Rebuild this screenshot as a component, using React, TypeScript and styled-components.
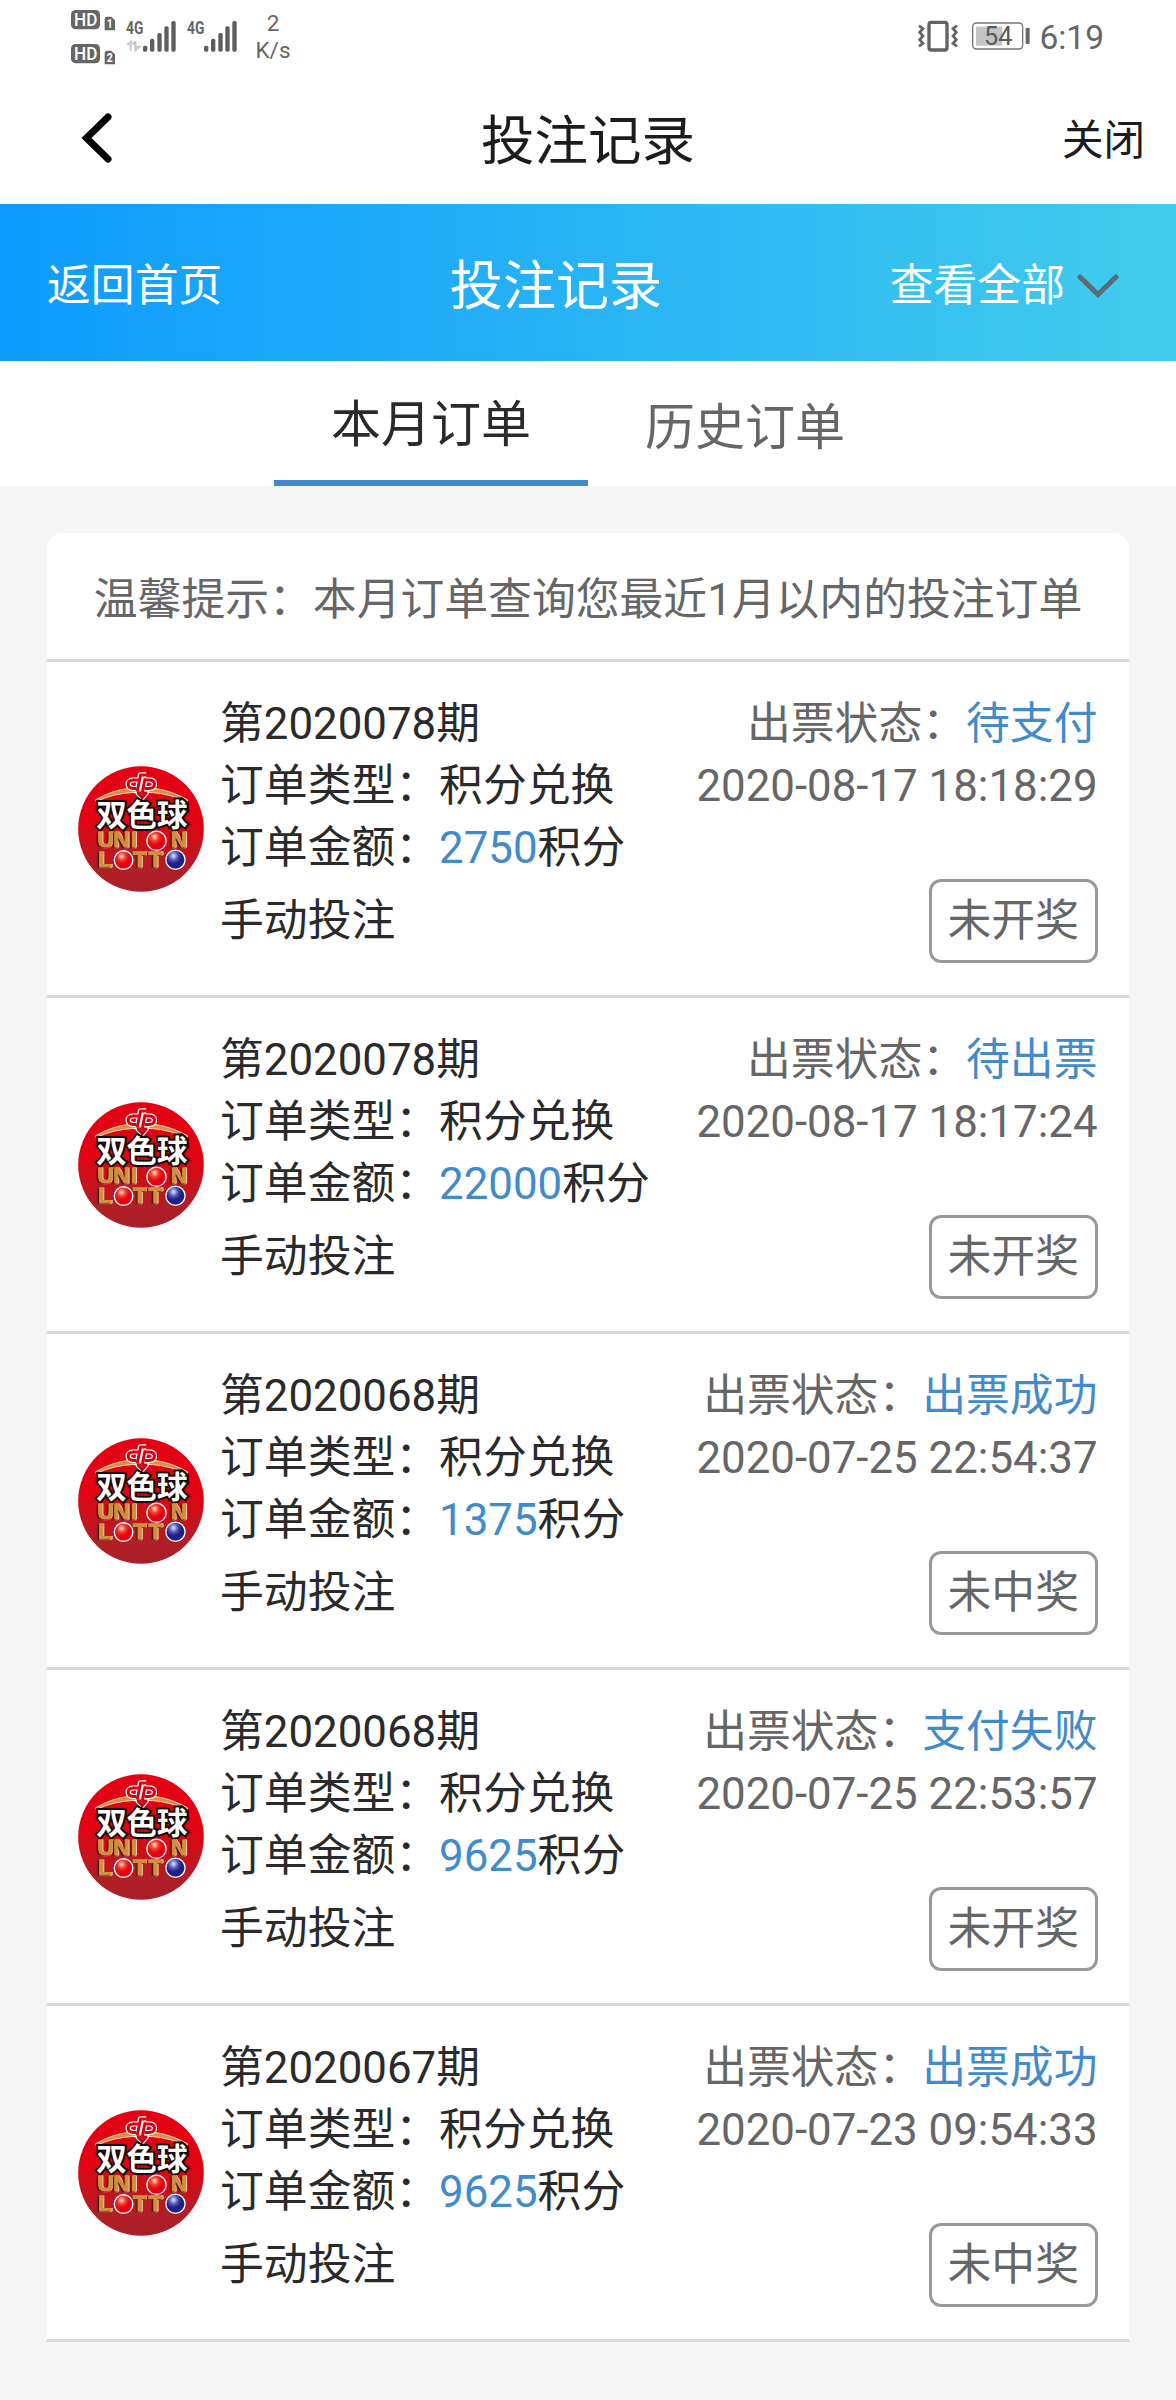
import styled, { createGlobalStyle } from "styled-components";

type Order = {
  issue: string;
  amount: string;
  status: string;
  time: string;
  result: string;
};

const orders: Order[] = [
  { issue: "2020078", amount: "2750", status: "待支付", time: "2020-08-17 18:18:29", result: "未开奖" },
  { issue: "2020078", amount: "22000", status: "待出票", time: "2020-08-17 18:17:24", result: "未开奖" },
  { issue: "2020068", amount: "1375", status: "出票成功", time: "2020-07-25 22:54:37", result: "未中奖" },
  { issue: "2020068", amount: "9625", status: "支付失败", time: "2020-07-25 22:53:57", result: "未开奖" },
  { issue: "2020067", amount: "9625", status: "出票成功", time: "2020-07-23 09:54:33", result: "未中奖" },
];

const HdIcon = ({ sim }: { sim: string }) => (
  <svg width="44" height="21" viewBox="64 30 132 63">
    <rect x="64" y="30" width="87" height="58" rx="14" fill="#666" />
    <text x="73" y="79" fontSize="56" fontWeight="500" textLength="70" lengthAdjust="spacingAndGlyphs" fill="#fff">
      HD
    </text>
    <path d="M165 91V58q0-8 8-8h12l11 11v30z" fill="#666" />
    <text x="171" y="85" fontSize="38" fontWeight="700" textLength="18" lengthAdjust="spacingAndGlyphs" fill="#fff">
      {sim}
    </text>
  </svg>
);

const SignalIcon = ({ data }: { data?: boolean }) => (
  <svg width="50" height="31" viewBox="230 62 150 93">
    <text x="230" y="102" fontSize="55" fontWeight="700" textLength="52" lengthAdjust="spacingAndGlyphs" fill="#666">
      4G
    </text>
    {data && (
      <path
        d="M234 133l10-9v28M252 133V124M258 122v28l12-11h-9"
        fill="none"
        stroke="#c8c8c8"
        strokeWidth="6"
      />
    )}
    <g fill="#5e5e5e">
      <rect x="281" y="136" width="13" height="18" rx="5" />
      <rect x="302" y="115" width="13" height="39" rx="5" />
      <rect x="324" y="98" width="13" height="56" rx="5" />
      <rect x="345" y="78" width="13" height="76" rx="5" />
      <rect x="366" y="62" width="13" height="92" rx="5" />
    </g>
  </svg>
);

const VibrateIcon = () => (
  <svg width="40" height="32" viewBox="86 60 120 96" fill="none" stroke="#636363">
    <rect x="119" y="67" width="54" height="83" rx="7" strokeWidth="10" />
    <path d="M89 77l12 9-10 11 10 11-10 11 10 11-12 9M203 77l-12 9 10 11-10 11 10 11-10 11 12 9" strokeWidth="8" />
  </svg>
);

const BatteryIcon = () => (
  <svg width="58" height="28" viewBox="249 68 174 84">
    <rect x="251" y="71" width="150" height="78" rx="11" fill="#fff" stroke="#777" strokeWidth="4" />
    <rect x="261" y="82" width="79" height="57" fill="#c4c4c4" />
    <rect x="410" y="85" width="12" height="49" rx="4" fill="#666" />
    <text x="285" y="136" fontSize="75" textLength="85" lengthAdjust="spacingAndGlyphs" fill="#5a5a5a">
      54
    </text>
  </svg>
);

const Emblem = ({ color, width }: { color: string; width: number }) => (
  <g fill="none" stroke={color} strokeWidth={width} strokeLinejoin="round">
    <path d="M234 89h-14q-15 2-15 13t15 13h9M258 89h10q16 1 16 12 0 13-17 14h-13" />
    <path d="M232 124l10-50h17M256 84l-9 44M235 128h24l-12 14z" />
  </g>
);

const LottoLogo = () => (
  <svg width="126" height="126" viewBox="54 47 379 379">
    <defs>
      <linearGradient id="disc" x1="0" y1="0" x2="0" y2="1">
        <stop offset="0" stopColor="#e60012" />
        <stop offset="0.45" stopColor="#e00414" />
        <stop offset="0.85" stopColor="#b01f26" />
        <stop offset="1" stopColor="#a82028" />
      </linearGradient>
      <radialGradient id="red" cx="0.4" cy="0.3" r="0.7">
        <stop offset="0" stopColor="#ffd9cc" />
        <stop offset="0.3" stopColor="#f0402e" />
        <stop offset="0.6" stopColor="#e60012" />
      </radialGradient>
      <radialGradient id="blue" cx="0.4" cy="0.3" r="0.7">
        <stop offset="0" stopColor="#e4e6ff" />
        <stop offset="0.35" stopColor="#4a4fae" />
        <stop offset="0.6" stopColor="#1d2088" />
      </radialGradient>
    </defs>
    <circle cx="243.5" cy="236.5" r="189" fill="url(#disc)" />
    <path
      d="M106 149q50-30 106-35h70q56 8 102 35l-2 5q-56-24-104-27h-62q-56 3-108 27z"
      fill="#e08a3c"
      stroke="#f6dcc0"
      strokeWidth="3"
    />
    <Emblem color="#fff" width={16} />
    <Emblem color="#d7000f" width={9} />
    <LogoName x="109 200 292" y="228">
      双色球
    </LogoName>
    <LogoWord x="112 160 213 262 333" y="291">
      UNION
    </LogoWord>
    <LogoWord x="114 164 219 266 318" y="351">
      LOTTO
    </LogoWord>
    <g stroke="#fff" strokeWidth="4">
      <circle cx="290" cy="272" r="29" fill="url(#red)" />
      <circle cx="191" cy="330" r="28" fill="url(#red)" />
      <circle cx="347" cy="329" r="29" fill="url(#blue)" />
    </g>
  </svg>
);

const OrderItem = ({ order }: { order: Order }) => (
  <Item>
    <LottoLogo />
    <Detail>
      <Line>第{order.issue}期</Line>
      <Line>订单类型：积分兑换</Line>
      <Line>
        订单金额：<Blue>{order.amount}</Blue>积分
      </Line>
      <Method>手动投注</Method>
    </Detail>
    <State>
      <Line>
        出票状态：<Blue>{order.status}</Blue>
      </Line>
      <Line>{order.time}</Line>
      <Result>{order.result}</Result>
    </State>
  </Item>
);

const App = () => {
  return (
    <Page>
      <GlobalStyle />
      <StatusBar>
        <HdList>
          <HdIcon sim="1" />
          <HdIcon sim="2" />
        </HdList>
        <SignalIcon data />
        <SignalIcon />
        <Speed>
          <span>2</span>
          <span>K/s</span>
        </Speed>
        <StatusRight>
          <VibrateIcon />
          <BatteryIcon />
          <Clock>6:19</Clock>
        </StatusRight>
      </StatusBar>
      <AppBar>
        <BackButton>
          <svg width="32" height="50" viewBox="0 0 32 50" fill="none" stroke="#000" strokeWidth="7">
            <path d="M27 4L5.5 25L27 46" strokeLinecap="round" />
          </svg>
        </BackButton>
        <AppTitle>投注记录</AppTitle>
        <CloseButton>关闭</CloseButton>
      </AppBar>
      <Header>
        <HeaderLink>返回首页</HeaderLink>
        <HeaderTitle>投注记录</HeaderTitle>
        <Filter>
          查看全部
          <svg width="42" height="24" viewBox="0 0 42 24" fill="none" stroke="#5b6b78" strokeWidth="5">
            <path d="M3 3L21 20.5L39 3" strokeLinecap="round" />
          </svg>
        </Filter>
      </Header>
      <Tabs>
        <Tab $active>本月订单</Tab>
        <Tab>历史订单</Tab>
      </Tabs>
      <Card>
        <Notice>温馨提示：本月订单查询您最近1月以内的投注订单</Notice>
        {orders.map((order) => (
          <OrderItem key={order.time} order={order} />
        ))}
      </Card>
    </Page>
  );
};

export default App;

const GlobalStyle = createGlobalStyle`
  * {
    box-sizing: border-box;
  }
  body {
    margin: 0;
    background: #f6f6f6;
  }
  svg {
    display: block;
    flex-shrink: 0;
    overflow: visible;
  }
`;
const Page = styled.div`
  width: 1176px;
  height: 2400px;
  overflow: hidden;
  background: #f6f6f6;
  color: #2a2a2a;
  font-family: Roboto, "Noto Sans CJK SC", sans-serif;
  font-size: 43.82px;
  line-height: 62px;
  white-space: nowrap;
`;
const StatusBar = styled.div`
  display: flex;
  align-items: center;
  gap: 11px;
  height: 72px;
  padding: 0 72px 0 71px;
  background: #fff;
  color: #666;
`;
const HdList = styled.div`
  display: flex;
  flex-direction: column;
  gap: 13px;
  padding-top: 2px;
`;
const Speed = styled.div`
  display: flex;
  flex-direction: column;
  align-items: center;
  width: 36px;
  margin-left: 7px;
  padding-top: 2px;
  font-size: 22.5px;
  line-height: 27px;
`;
const StatusRight = styled.div`
  display: flex;
  align-items: center;
  margin-left: auto;
  gap: 14px;
`;
const Clock = styled.div`
  margin-left: -5px;
  padding-top: 3px;
  font-size: 33.5px;
  line-height: 40px;
`;
const AppBar = styled.div`
  display: grid;
  grid-template-columns: 1fr auto 1fr;
  align-items: center;
  height: 132px;
  padding: 0 31px;
  background: #fff;
  color: #1c1c1c;
`;
const BackButton = styled.div`
  display: flex;
  padding-left: 50px;
`;
const AppTitle = styled.div`
  padding-top: 8px;
  font-size: 53.5px;
`;
const CloseButton = styled.div`
  padding-top: 5px;
  text-align: right;
  font-size: 41.5px;
`;
const Header = styled.div`
  display: flex;
  align-items: center;
  justify-content: space-between;
  height: 157px;
  padding: 0 57px 0 47px;
  background: linear-gradient(90deg, #0e9bfd, #42ccec);
  color: #fff;
`;
const HeaderLink = styled.div`
  padding-top: 7px;
`;
const HeaderTitle = styled.div`
  padding-top: 9px;
  font-size: 53.1px;
`;
const Filter = styled.div`
  display: flex;
  align-items: center;
  gap: 12px;
  padding-top: 7px;
`;
const Tabs = styled.div`
  display: flex;
  justify-content: center;
  height: 125px;
  background: #fff;
`;
const Tab = styled.div<{ $active?: boolean }>`
  display: flex;
  align-items: center;
  justify-content: center;
  width: 314px;
  padding-top: 8px;
  font-size: 50px;
  color: ${({ $active }) => ($active ? "#2a2a2a" : "#666")};
  border-bottom: ${({ $active }) => ($active ? "6px solid #428bca" : "none")};
`;
const Card = styled.div`
  width: 1082px;
  margin: 47px auto 0;
  border-radius: 16px 16px 0 0;
  background: #fff;
`;
const Notice = styled.div`
  display: flex;
  align-items: center;
  justify-content: center;
  height: 129px;
  padding-top: 7px;
  border-bottom: 3px solid #d9d9d9;
  color: #666;
`;
const Item = styled.div`
  display: flex;
  align-items: center;
  height: 336px;
  padding: 0 31.5px 0 31px;
  border-bottom: 3px solid #d9d9d9;
`;
const Detail = styled.div`
  display: flex;
  flex-direction: column;
  align-self: stretch;
  margin-left: 16px;
  padding-top: 31px;
`;
const State = styled.div`
  display: flex;
  flex-direction: column;
  align-items: flex-end;
  align-self: stretch;
  margin-left: auto;
  padding-top: 31px;
  color: #666;
`;
const Line = styled.div`
  height: 62px;
`;
const Method = styled.div`
  margin-top: 11px;
`;
const Blue = styled.span`
  color: #428bca;
`;
const Result = styled.div`
  display: flex;
  align-items: center;
  justify-content: center;
  width: 168.5px;
  height: 84px;
  margin-top: 62px;
  border: 3px solid #999;
  border-radius: 12px;
`;
const LogoName = styled.text`
  font-family: "Noto Sans CJK SC", sans-serif;
  font-size: 92px;
  font-weight: 700;
  fill: #fff;
  stroke: #1a0a0a;
  stroke-width: 12px;
  paint-order: stroke;
`;
const LogoWord = styled.text`
  font-family: "Liberation Sans", sans-serif;
  font-size: 68px;
  font-weight: 700;
  fill: #d68c3e;
  stroke: #d68c3e;
  stroke-width: 3px;
  filter: drop-shadow(-4px 2px 0 #2b1208) drop-shadow(3px 0 0 #f0cfa8);
`;
